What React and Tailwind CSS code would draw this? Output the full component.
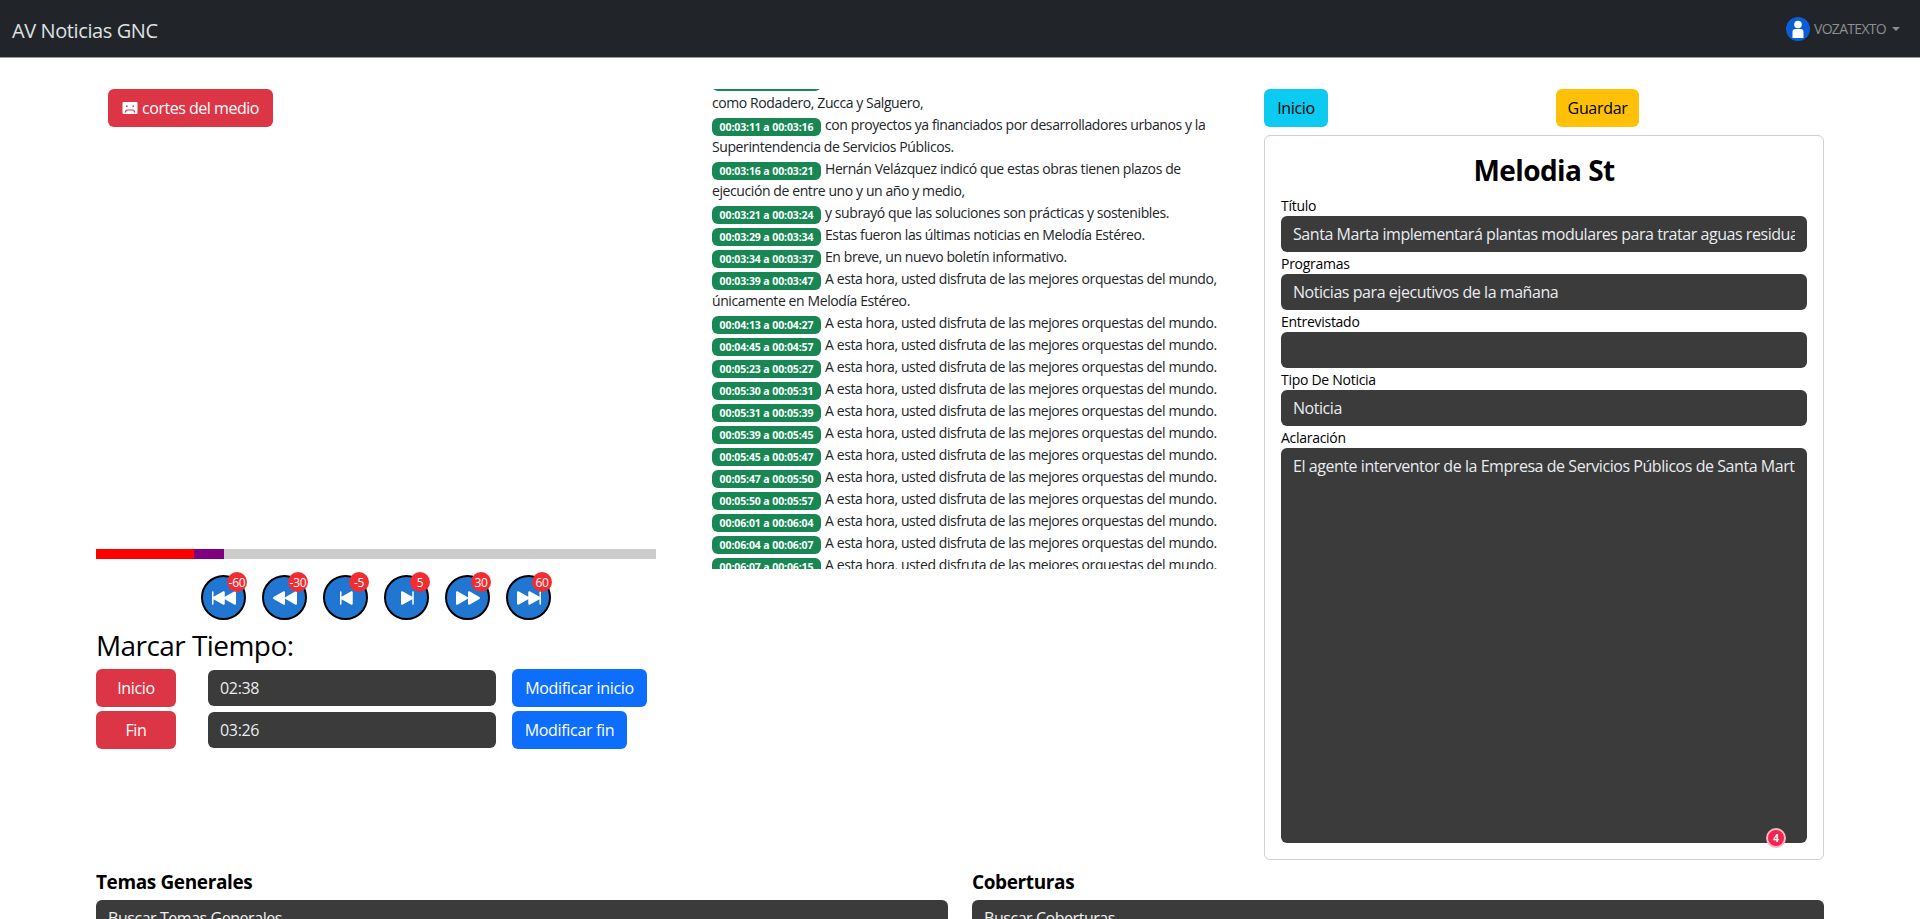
import { useState } from 'react'
import {
    BsSkipBackwardFill,
    BsRewindFill,
    BsSkipStartFill,
    BsSkipEndFill,
    BsFastForwardFill,
    BsSkipForwardFill,
} from 'react-icons/bs'

const controles = [
    { label: '-60', Icono: BsSkipBackwardFill },
    { label: '-30', Icono: BsRewindFill },
    { label: '-5', Icono: BsSkipStartFill },
    { label: '5', Icono: BsSkipEndFill },
    { label: '30', Icono: BsFastForwardFill },
    { label: '60', Icono: BsSkipForwardFill },
]

const ORQUESTAS = 'A esta hora, usted disfruta de las mejores orquestas del mundo.'

const lineas = [
    ['00:03:06 a 00:03:11', 'como Rodadero, Zucca y Salguero,'],
    ['00:03:11 a 00:03:16', 'con proyectos ya financiados por desarrolladores urbanos y la Superintendencia de Servicios Públicos.'],
    ['00:03:16 a 00:03:21', 'Hernán Velázquez indicó que estas obras tienen plazos de ejecución de entre uno y un año y medio,'],
    ['00:03:21 a 00:03:24', 'y subrayó que las soluciones son prácticas y sostenibles.'],
    ['00:03:29 a 00:03:34', 'Estas fueron las últimas noticias en Melodía Estéreo.'],
    ['00:03:34 a 00:03:37', 'En breve, un nuevo boletín informativo.'],
    ['00:03:39 a 00:03:47', 'A esta hora, usted disfruta de las mejores orquestas del mundo, únicamente en Melodía Estéreo.'],
    ['00:04:13 a 00:04:27', ORQUESTAS],
    ['00:04:45 a 00:04:57', ORQUESTAS],
    ['00:05:23 a 00:05:27', ORQUESTAS],
    ['00:05:30 a 00:05:31', ORQUESTAS],
    ['00:05:31 a 00:05:39', ORQUESTAS],
    ['00:05:39 a 00:05:45', ORQUESTAS],
    ['00:05:45 a 00:05:47', ORQUESTAS],
    ['00:05:47 a 00:05:50', ORQUESTAS],
    ['00:05:50 a 00:05:57', ORQUESTAS],
    ['00:06:01 a 00:06:04', ORQUESTAS],
    ['00:06:04 a 00:06:07', ORQUESTAS],
    ['00:06:07 a 00:06:15', ORQUESTAS],
]

function Campo({ label, value }) {
    return (
        <div>
            <label className="block h-[22px] text-sm leading-[24px] text-black tracking-[-0.02em]">{label}</label>
            <input
                readOnly
                defaultValue={value}
                className="block h-9 w-full rounded-md bg-[#3b3b3b] px-3 text-base text-[#e9ecef] tracking-[-0.028em] outline-none"
            />
        </div>
    )
}

function Buscador({ titulo, placeholder }) {
    return (
        <div className="flex-1">
            <h5 className="mb-[6px] text-[19px] leading-6 font-bold text-black tracking-[-0.02em]">{titulo}</h5>
            <div className="h-[60px] rounded-md bg-[#3b3b3b] px-3 pt-[6px] text-base leading-6 text-[#f1f1f1] tracking-[-0.028em]">
                {placeholder}
            </div>
        </div>
    )
}

export default function App() {
    const [inicio] = useState('02:38')
    const [fin] = useState('03:26')

    return (
        <div className="h-screen overflow-hidden bg-white font-['Open_Sans',sans-serif]">
            <nav className="flex h-[58px] items-center justify-between border-b border-[#9a9a9a] bg-[#212529] pl-3 pr-5">
                <span className="mt-1 text-xl text-[#dfe0e1] tracking-[-0.02em]">AV Noticias GNC</span>
                <div className="flex items-center text-[#8c8e91]">
                    <span className="flex h-6 w-6 items-center justify-center rounded-full bg-[#0b5ed7]">
                        <svg viewBox="0 0 24 24" className="h-6 w-6" fill="#fff">
                            <circle cx="12" cy="7.5" r="3.8" />
                            <path d="M6.5 15a3 3 0 0 1 3-3h5a3 3 0 0 1 3 3v6h-11z" />
                        </svg>
                    </span>
                    <span className="ml-1 text-sm tracking-[-0.05em]">VOZATEXTO</span>
                    <span className="ml-[6px] h-0 w-0 border-x-[4px] border-t-[4px] border-x-transparent border-t-[#8c8e91]" />
                </div>
            </nav>

            <main className="px-24 pt-[31px]">
                <div className="flex">
                    <section className="w-[560px] shrink-0">
                        <button className="ml-3 flex h-[38px] w-[165px] items-center justify-center gap-1 rounded-md bg-[#dc3545] text-base text-white tracking-[-0.03em]">
                            <svg viewBox="0 0 16 16" className="h-4 w-4" fill="#fff">
                                <path d="M1.5 2h13A1 1 0 0 1 15.5 3v10a1 1 0 0 1-1 1h-13a1 1 0 0 1-1-1V3a1 1 0 0 1 1-1z" />
                                <path fill="#dc3545" d="M4 5.5h1.6v1.6H4zM10.4 5.5H12v1.6h-1.6zM2.6 12.6c.4-2.2 1.3-3.2 2.6-3.2h5.6c1.3 0 2.2 1 2.6 3.2h-1.4c-.3-1.4-.7-2-1.4-2H5.4c-.7 0-1.1.6-1.4 2z" />
                            </svg>
                            cortes del medio
                        </button>

                        <div className="mt-[422px] flex h-[10px] bg-[#cccccc]">
                            <div className="w-[98px] bg-[#ff0000]" />
                            <div className="w-[30px] bg-[#800080]" />
                        </div>

                        <div className="mt-4 flex justify-center gap-4">
                            {controles.map(({ label, Icono }) => (
                                <button
                                    key={label}
                                    className="relative flex h-[45px] w-[45px] items-center justify-center rounded-full border-2 border-black bg-[#2176d2] text-white"
                                >
                                    <Icono className="h-6 w-6" />
                                    <span className="absolute -top-[5px] -right-[3px] flex h-5 w-5 items-center justify-center rounded-full bg-[#f02d32] pt-px text-xs leading-none text-white tracking-[-0.02em]">
                                        {label}
                                    </span>
                                </button>
                            ))}
                        </div>

                        <h3 className="mt-2 text-[28px] leading-[34px] text-black tracking-[-0.02em]">Marcar Tiempo:</h3>

                        <div className="mt-[7px] flex flex-col gap-1">
                            <div className="flex items-center">
                                <button className="h-[38px] w-20 rounded-md bg-[#dc3545] text-base text-white tracking-[-0.02em]">Inicio</button>
                                <input readOnly value={inicio} className="ml-8 h-9 w-[288px] rounded-md bg-[#3b3b3b] px-3 text-base text-[#e9ecef] tracking-[-0.02em] outline-none" />
                                <button className="ml-4 h-[38px] w-[135px] rounded-md bg-[#0d6efd] text-base text-white tracking-[-0.02em]">Modificar inicio</button>
                            </div>
                            <div className="flex items-center">
                                <button className="h-[38px] w-20 rounded-md bg-[#dc3545] text-base text-white tracking-[-0.02em]">Fin</button>
                                <input readOnly value={fin} className="ml-8 h-9 w-[288px] rounded-md bg-[#3b3b3b] px-3 text-base text-[#e9ecef] tracking-[-0.02em] outline-none" />
                                <button className="ml-4 h-[38px] w-[115px] rounded-md bg-[#0d6efd] text-base text-white tracking-[-0.02em]">Modificar fin</button>
                            </div>
                        </div>
                    </section>

                    <section className="ml-14 h-[480px] w-[506px] shrink-0 overflow-hidden text-sm leading-[22px] text-[#212529] tracking-[-0.029em]">
                        <div className="-mt-[19px]">
                            {lineas.map(([tiempo, texto], i) => (
                                <div key={tiempo}>
                                    <span className={`mr-1 inline-block w-[109px] rounded-md bg-[#198754] text-center align-[-1px] text-[10.5px] leading-[18px] font-bold tracking-[-0.01em] text-white ${i === 0 ? 'h-[17px]' : 'h-[18px]'}`}>
                                        {tiempo}
                                    </span>
                                    {i === 0 ? <br /> : null}
                                    {texto}
                                </div>
                            ))}
                        </div>
                    </section>

                    <section className="ml-[46px] w-[560px] shrink-0">
                        <div className="flex">
                            <button className="h-[38px] w-16 rounded-md bg-[#0dcaf0] text-base text-black tracking-[-0.02em]">Inicio</button>
                            <button className="ml-[228px] h-[38px] w-[83px] rounded-md bg-[#ffc107] text-base text-black tracking-[-0.02em]">Guardar</button>
                        </div>
                        <div className="mt-2 h-[725px] rounded-md border border-[#d0d0d0] px-4 pt-[15px]">
                            <h2 className="mb-[5px] text-center text-[28px] leading-[38px] font-bold text-black tracking-[-0.02em]">Melodia St</h2>
                            <Campo label="Título" value="Santa Marta implementará plantas modulares para tratar aguas residuales" />
                            <Campo label="Programas" value="Noticias para ejecutivos de la mañana" />
                            <Campo label="Entrevistado" value="" />
                            <Campo label="Tipo De Noticia" value="Noticia" />
                            <label className="block h-[22px] text-sm leading-[24px] text-black tracking-[-0.02em]">Aclaración</label>
                            <div className="relative">
                                <textarea
                                    readOnly
                                    wrap="off"
                                    defaultValue="El agente interventor de la Empresa de Servicios Públicos de Santa Marta informó sobre las obras"
                                    className="block h-[395px] w-full resize-none overflow-hidden rounded-md border-r-[12px] border-[#3b3b3b] bg-[#3b3b3b] py-[6px] pl-3 text-base text-[#e9ecef] tracking-[-0.028em] outline-none"
                                />
                                <span className="absolute right-[21px] bottom-[-5px] flex h-5 w-5 items-center justify-center rounded-full border-2 border-[#ffb3c3] bg-[#f4244f] text-[10px] font-bold text-white">
                                    4
                                </span>
                            </div>
                        </div>
                    </section>
                </div>

                <div className="mt-[10px] flex gap-6">
                    <Buscador titulo="Temas Generales" placeholder="Buscar Temas Generales" />
                    <Buscador titulo="Coberturas" placeholder="Buscar Coberturas" />
                </div>
            </main>
        </div>
    )
}
